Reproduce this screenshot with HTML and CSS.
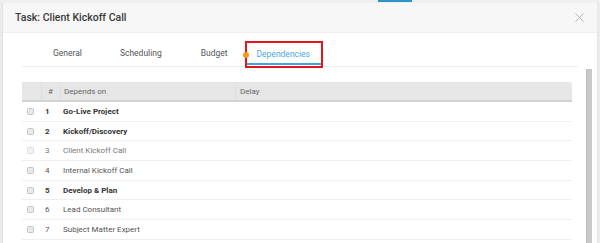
FILE: index.html
```html
<!DOCTYPE html>
<html>
<head>
<meta charset="utf-8">
<link rel="stylesheet" href="styles.css">
</head>
<body>
<div class="appbar"><span class="appbar-active"></span></div>
<div class="modal">
  <div class="modal-header">
    <span class="modal-title">Task: Client Kickoff Call</span>
    <svg class="close" width="9" height="9" viewBox="0 0 9 9"><path d="M0.5 0.5L8.5 8.5M8.5 0.5L0.5 8.5" stroke="#b5b5b5" stroke-width="1"/></svg>
  </div>
  <div class="modal-body">
    <div class="content">
      <div class="tabs">
        <div class="tab tab-general">General</div>
        <div class="tab tab-sched">Scheduling</div>
        <div class="tab tab-budget">Budget</div>
        <div class="tab tab-dep"><span class="dot"></span><span class="tab-dep-inner">Dependencies</span></div>
      </div>
      <div class="table">
        <div class="thead">
          <div class="c c-check"></div>
          <div class="c c-num sep">#</div>
          <div class="c c-name sep">Depends on</div>
          <div class="c c-delay sep">Delay</div>
        </div>
        <div class="row bold"><div class="c c-check"><span class="cb"></span></div><div class="c c-num">1</div><div class="c c-name">Go-Live Project</div><div class="c c-delay"></div></div>
        <div class="row bold"><div class="c c-check"><span class="cb"></span></div><div class="c c-num">2</div><div class="c c-name">Kickoff/Discovery</div><div class="c c-delay"></div></div>
        <div class="row disabled"><div class="c c-check"><span class="cb"></span></div><div class="c c-num">3</div><div class="c c-name">Client Kickoff Call</div><div class="c c-delay"></div></div>
        <div class="row"><div class="c c-check"><span class="cb"></span></div><div class="c c-num">4</div><div class="c c-name">Internal Kickoff Call</div><div class="c c-delay"></div></div>
        <div class="row bold"><div class="c c-check"><span class="cb"></span></div><div class="c c-num">5</div><div class="c c-name">Develop &amp; Plan</div><div class="c c-delay"></div></div>
        <div class="row"><div class="c c-check"><span class="cb"></span></div><div class="c c-num">6</div><div class="c c-name">Lead Consultant</div><div class="c c-delay"></div></div>
        <div class="row"><div class="c c-check"><span class="cb"></span></div><div class="c c-num">7</div><div class="c c-name">Subject Matter Expert</div><div class="c c-delay"></div></div>
      </div>
    </div>
    <div class="scrollbar"></div>
  </div>
</div>
</body>
</html>
```
FILE: styles.css
```css
html, body { margin: 0; padding: 0; }
body {
  background: #ebebeb;
  font-family: Roboto, "Liberation Sans", sans-serif;
  width: 600px;
  height: 243px;
  overflow: hidden;
  position: relative;
}
.appbar {
  height: 3px;
  background: #f0f0f0;
  position: relative;
}
.appbar-active {
  position: absolute;
  left: 378px;
  top: 0;
  width: 34px;
  height: 2px;
  background: #2a93c9;
}
.modal {
  margin: 0 2px 0 2px;
  background: #fff;
  border-left: 1px solid #e2e2e2;
  border-right: 1px solid #e6e6e6;
  height: 240px;
  overflow: hidden;
}
.modal-header {
  height: 29px;
  background: #f7f7f7;
  border-bottom: 1px solid #efefef;
  display: flex;
  align-items: center;
  justify-content: space-between;
  padding: 0 12px 0 12px;
}
.modal-title {
  font-size: 10.5px;
  font-weight: 500;
  color: #3a3a3a;
}
.close { margin-right: 1px; margin-top: 0; }
.modal-body {
  display: flex;
}
.content {
  flex: 1;
  padding: 0 0 0 19px;
}
.tabs {
  display: flex;
  height: 33px;
  border-bottom: 1px solid #eeeeee;
  margin-right: 8px;
  align-items: stretch;
}
.tab {
  font-size: 8.5px;
  color: #555;
  display: flex;
  align-items: center;
  padding-top: 6px;
}
.tab-general { margin-left: 31px; }
.tab-sched { margin-left: 38px; }
.tab-budget { margin-left: 39px; }
.tab-dep {
  margin-left: 17px;
  position: relative;
  margin-top: 8px;
  margin-bottom: -2px;
  border: 2px solid #e8141b;
  padding: 0;
  width: 78px;
  box-sizing: border-box;
  align-items: stretch;
}
.tab-dep-inner {
  color: #4aa9df;
  display: flex;
  align-items: center;
  padding-left: 10px;
  width: 100%;
  border-bottom: 2px solid #3ba7e0;
  margin-bottom: 1px;
  padding-top: 1px;
}
.dot {
  position: absolute;
  left: -4px;
  top: 9px;
  width: 6px;
  height: 6px;
  border-radius: 50%;
  background: #f49a1a;
}
.table {
  margin-top: 15px;
  width: 550px;
}
.thead {
  display: flex;
  height: 18px;
  background: #e6e6e6;
  border-bottom: 2px solid #d2d2d2;
  border-radius: 0 3px 0 0;
  font-size: 8px;
  color: #666;
}
.thead .c { display: flex; align-items: center; }
.sep { border-left: 1px solid #dedede; }
.c { box-sizing: border-box; }
.c-check { width: 19px; display: flex; align-items: center; padding-left: 5px; }
.c-num { width: 19px; padding-left: 5px; }
.thead .c-num { padding-left: 6px; }
.c-name { width: 175px; padding-left: 3px; }
.c-delay { flex: 1; padding-left: 4px; }
.row {
  display: flex;
  height: 18.7px;
  border-bottom: 1px solid #efefef;
  font-size: 8px;
  color: #555;
  align-items: center;
}
.row .c-num { padding-left: 4px; }
.row.bold { font-weight: 700; color: #333; }
.row.disabled { color: #777; }
.cb {
  display: block;
  width: 5px;
  height: 5px;
  border: 1px solid #c4c4c4;
  border-radius: 1.5px;
  background: #e9e9e9;
}
.row.disabled .cb { border-color: #dcdcdc; background: #f2f2f2; }
.scrollbar {
  width: 6px;
  background: #c9c9c9;
  border-left: 1px solid #bdbdbd;
  box-sizing: border-box;
  margin-top: 36px;
  height: 200px;
  margin-right: 5px;
}
```
